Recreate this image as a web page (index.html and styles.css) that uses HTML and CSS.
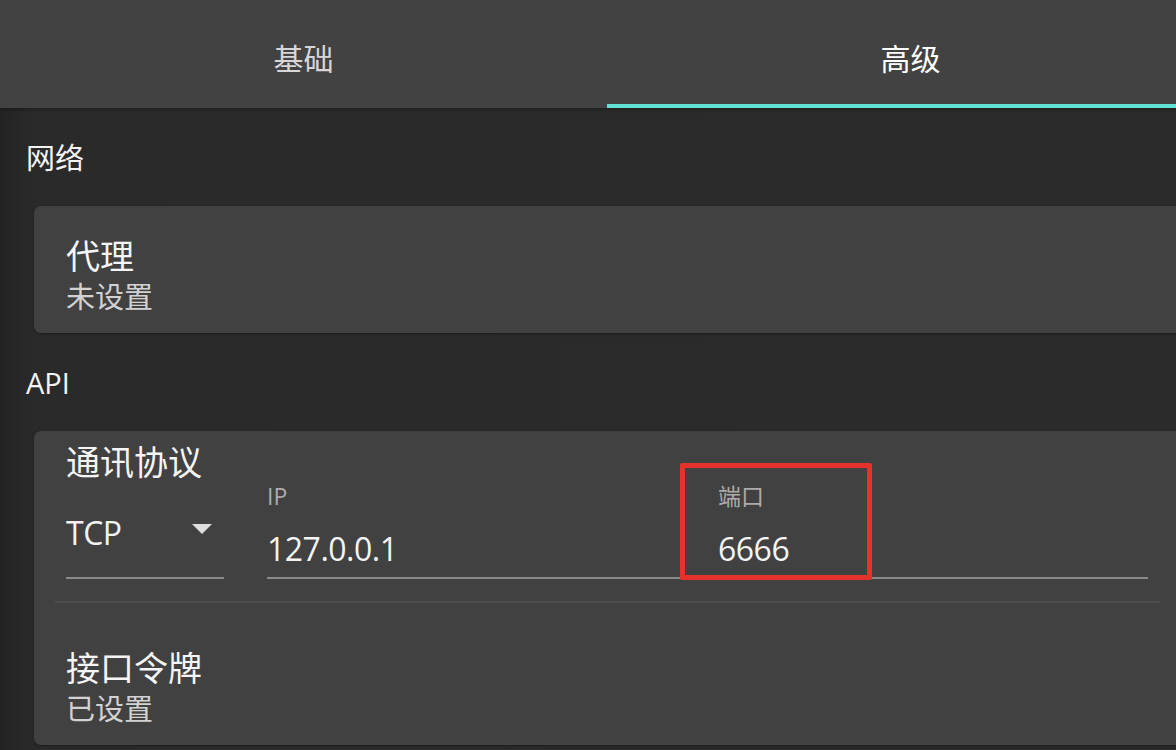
FILE: index.html
```html
<!DOCTYPE html>
<html lang="zh-CN">
<head>
<meta charset="utf-8">
<title>设置 - 高级</title>
<link rel="stylesheet" href="styles.css">
</head>
<body>
<div class="page">
  <nav class="tabs">
    <div class="tab">基础</div>
    <div class="tab active">高级</div>
  </nav>

  <section class="group">
    <h2 class="group-title">网络</h2>
    <div class="card">
      <div class="item">
        <div class="item-title">代理</div>
        <div class="item-sub">未设置</div>
      </div>
    </div>
  </section>

  <section class="group">
    <h2 class="group-title">API</h2>
    <div class="card">
      <div class="protocol">
        <div class="item-title">通讯协议</div>
        <div class="fields">
          <div class="select">
            <span class="select-value">TCP</span>
            <svg class="arrow" width="20" height="10" viewBox="0 0 20 10"><polygon points="0,0 20,0 10,10" fill="#dedede"/></svg>
          </div>
          <div class="field ip">
            <div class="field-label">IP</div>
            <div class="field-value">127.0.0.1</div>
          </div>
          <div class="field port">
            <div class="field-label">端口</div>
            <div class="field-value">6666</div>
            <div class="highlight"></div>
          </div>
        </div>
      </div>
      <div class="divider"></div>
      <div class="item token">
        <div class="item-title">接口令牌</div>
        <div class="item-sub">已设置</div>
      </div>
    </div>
  </section>
</div>
</body>
</html>
```
FILE: styles.css
```css
html, body {
  margin: 0;
  padding: 0;
}
body {
  width: 1176px;
  height: 750px;
  overflow: hidden;
  background: linear-gradient(to right, #232323 0px, #2a2a2a 34px, #2b2b2b 100%);
  font-family: "Open Sans", "Noto Sans CJK SC", sans-serif;
  color: #f2f2f2;
}
.page {
  width: 1176px;
}
.tabs {
  display: flex;
  height: 108px;
  background: #424242;
  overflow: hidden;
  box-shadow: 0 2px 3px rgba(0,0,0,0.25);
  position: relative;
}
.tab {
  flex: 0 0 607px;
  display: flex;
  align-items: center;
  justify-content: center;
  font-family: "Noto Sans CJK SC", sans-serif;
  font-size: 30px;
  color: #d6d6d6;
  padding-top: 10px;
  box-sizing: border-box;
  border-bottom: 4px solid transparent;
}
.tab.active {
  color: #ffffff;
  border-bottom-color: #62e2d4;
}
.group {
  padding-left: 26px;
}
.group-title {
  margin: 32px 0 30px 0;
  font-family: "Open Sans", "Noto Sans CJK SC", sans-serif;
  font-weight: 400;
  font-size: 29px;
  line-height: 36px;
  color: #f4f4f4;
}
.card {
  margin-left: 8px;
  width: 1170px;
  background: #414141;
  border-radius: 7px;
  box-shadow: 0 1px 3px rgba(0,0,0,0.35);
}
.item {
  padding: 29px 32px 18px 32px;
}
.item-title {
  font-family: "Noto Sans CJK SC", sans-serif;
  font-size: 34px;
  line-height: 40px;
  color: #f5f5f5;
}
.item-sub {
  font-family: "Noto Sans CJK SC", sans-serif;
  font-size: 29px;
  line-height: 40px;
  color: #d2d2d2;
}
.protocol {
  padding: 10px 32px 0 32px;
}
.fields {
  display: flex;
  align-items: flex-end;
  height: 98px;
}
.select {
  width: 158px;
  height: 98px;
  box-sizing: border-box;
  display: flex;
  align-items: center;
  justify-content: space-between;
  padding: 32px 12px 24px 0;
  border-bottom: 2px solid #8a8a8a;
}
.select-value {
  font-size: 32px;
  line-height: 40px;
  color: #f2f2f2;
  letter-spacing: -0.5px;
}
.arrow {
  display: block;
  margin-top: -8px;
}
.field {
  height: 98px;
  box-sizing: border-box;
  border-bottom: 2px solid #8a8a8a;
  position: relative;
}
.field.ip {
  margin-left: 43px;
  width: 423px;
}
.field.port {
  margin-left: 28px;
  width: 430px;
}
.field-label {
  font-family: "Open Sans", "Noto Sans CJK SC", sans-serif;
  font-size: 23px;
  line-height: 30px;
  color: #ababab;
}
.field-value {
  margin-top: 18px;
  font-size: 32px;
  line-height: 40px;
  color: #f4f4f4;
  letter-spacing: -0.5px;
}
.highlight {
  position: absolute;
  left: -38px;
  top: -18px;
  width: 192px;
  height: 117px;
  box-sizing: border-box;
  border: 5px solid #e5332c;
  border-radius: 2px;
}
.divider {
  margin: 22px 0 0 21px;
  width: 1105px;
  height: 2px;
  background: #4d4d4d;
}
.item.token {
  padding-top: 44px;
}
```
